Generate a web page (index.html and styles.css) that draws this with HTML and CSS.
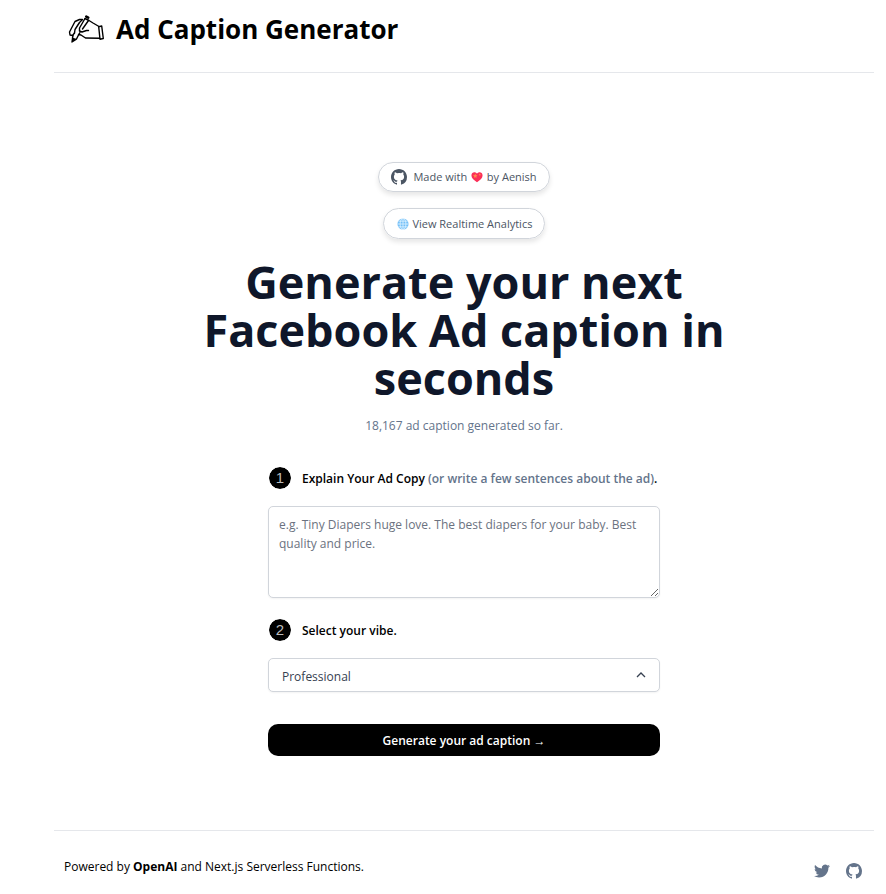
FILE: index.html
```html
<!DOCTYPE html>
<html lang="en">
<head>
<meta charset="utf-8">
<meta name="viewport" content="width=device-width, initial-scale=1">
<title>Ad Caption Generator</title>
<link rel="stylesheet" href="styles.css">
</head>
<body>
<svg class="sprite" aria-hidden="true">
  <symbol id="github" viewBox="2 2 20 20"><path fill="currentColor" d="M12 2C6.477 2 2 6.484 2 12.017c0 4.425 2.865 8.18 6.839 9.504.5.092.682-.217.682-.483 0-.237-.008-.868-.013-1.703-2.782.605-3.369-1.343-3.369-1.343-.454-1.158-1.11-1.466-1.11-1.466-.908-.62.069-.608.069-.608 1.003.07 1.531 1.032 1.531 1.032.892 1.53 2.341 1.088 2.91.832.092-.647.35-1.088.636-1.338-2.22-.253-4.555-1.113-4.555-4.951 0-1.093.39-1.988 1.029-2.688-.103-.253-.446-1.272.098-2.65 0 0 .84-.27 2.75 1.026A9.564 9.564 0 0 1 12 6.844c.85.004 1.705.115 2.504.337 1.909-1.296 2.747-1.027 2.747-1.027.546 1.379.202 2.398.1 2.651.64.7 1.028 1.595 1.028 2.688 0 3.848-2.339 4.695-4.566 4.943.359.309.678.92.678 1.855 0 1.338-.012 2.419-.012 2.747 0 .268.18.58.688.482A10.019 10.019 0 0 0 22 12.017C22 6.484 17.522 2 12 2z"/></symbol>
</svg>
<div class="page">
  <header class="header">
    <a class="brand" href="#">
      <svg class="brand-icon" viewBox="0 0 36 28" aria-hidden="true" fill="none" stroke="#000" stroke-width="1.400" stroke-linejoin="round" stroke-linecap="round">
        <path d="M14.500 4.500 11.500 4.500 7 6.500 1.500 17 2 20 4.500 20.500 6.500 18"/>
        <path d="M4.500 23 5 20.500M8.500 24 10.500 20 12 17.500"/>
        <path d="M6.500 18 7 14.500 11.500 7.500 14 5"/>
        <path d="M17 3.500 11.500 13 11.500 16 14 17 18.500 15.500 20.500 15.500M14.500 14 20.500 5.500"/>
        <path d="M17 3.500 21 5.500 25 8 31 11.500"/>
        <path d="M10.500 19.500 13 20 17.500 23 31.500 23.300"/>
        <path d="M30.700 11.700 33.700 11 35.300 23.500 32 24.200Z"/>
        <path d="M4.500 23.500 4 27 8 24.500Z" fill="#000"/>
        <path d="M18.300 1.600 20.200 2.600" stroke-width="2.600"/>
      </svg>
      <h1 class="brand-name">Ad Caption Generator</h1>
    </a>
  </header>
  <main class="main">
    <a class="pill" href="#">
      <svg class="pill-icon"><use href="#github"/></svg>
      <span class="pill-text">Made with
        <svg class="emoji" viewBox="0 0 14 14" role="img" aria-label="love"><path d="M7 13C3 10.500.5 8 .5 5.200.5 1 5.500.5 7 3.300 8.500.5 13.500 1 13.500 5.200 13.500 8 11 10.500 7 13Z" fill="#fb2f58"/><path d="m5 3 .8 1.700 1.800.3-1.300 1.200.3 1.800L5 7.200 3.400 8l.3-1.800L2.400 5l1.800-.3Z" fill="#ff8a4d"/><path d="m10.300 2.500.4 1 1 .3-.8.600.1 1-.8-.5-.8.500.2-1-.7-.600 1-.3Z" fill="#ff8a4c"/></svg>
        by Aenish</span>
    </a>
    <a class="pill" href="#">
      <span class="pill-text"><svg class="emoji" viewBox="0 0 14 14" aria-hidden="true"><circle cx="7" cy="7" r="6.500" fill="#74c0f8"/><g fill="none" stroke="#e4f5ff" stroke-width=".9"><ellipse cx="7" cy="7" rx="3.400" ry="6.500"/><path d="M7 .5v13M.5 7h13M1.500 3.700h11M1.500 10.300h11"/></g></svg>
        View Realtime Analytics</span>
    </a>
    <h2 class="headline">Generate your next Facebook Ad caption in seconds</h2>
    <p class="count">18,167 ad caption generated so far.</p>
    <form class="form">
      <div class="step">
        <span class="number">1</span>
        <label for="copy">Explain Your Ad Copy <span class="hint">(or write a few sentences about the ad)</span>.</label>
      </div>
      <textarea id="copy" rows="4" placeholder="e.g. Tiny Diapers huge love. The best diapers for your baby. Best quality and price."></textarea>
      <div class="step">
        <span class="number">2</span>
        <label for="vibe">Select your vibe.</label>
      </div>
      <div class="select-wrap">
        <select id="vibe"><option>Professional</option><option>Casual</option><option>Funny</option></select>
        <svg class="chevron" viewBox="0 0 16 16" aria-hidden="true"><path d="m4 10 4-4 4 4" fill="none" stroke="#374151" stroke-width="1.300"/></svg>
      </div>
      <button class="submit" type="button">Generate your ad caption →</button>
    </form>
  </main>
  <footer class="footer">
    <p class="powered">Powered by <a href="#">OpenAI</a> and Next.js Serverless Functions.</p>
    <nav class="social">
      <a href="#" aria-label="Twitter"><svg viewBox="0 0 24 24"><path fill="currentColor" d="M23.950 4.570a10 10 0 0 1-2.820.77 4.960 4.960 0 0 0 2.160-2.720c-.95.550-2 .95-3.130 1.180a4.920 4.920 0 0 0-8.380 4.480C7.690 8.090 4.070 6.130 1.640 3.160a4.820 4.820 0 0 0-.67 2.480c0 1.710.87 3.210 2.190 4.100a4.900 4.900 0 0 1-2.230-.62v.06a4.920 4.920 0 0 0 3.950 4.830 5 5 0 0 1-2.210.08 4.940 4.940 0 0 0 4.600 3.420A9.870 9.870 0 0 1 0 19.540a13.990 13.990 0 0 0 7.560 2.210c9.050 0 14-7.500 14-13.980 0-.21 0-.42-.02-.63a9.940 9.940 0 0 0 2.410-2.570z"/></svg></a>
      <a href="#" aria-label="GitHub"><svg><use href="#github"/></svg></a>
    </nav>
  </footer>
</div>
</body>
</html>
```
FILE: styles.css
```css
* { box-sizing: border-box; }
body, h1, h2, p { margin: 0; }
body {
  background: #fff;
  color: #000;
  font-family: "Segoe UI", "Open Sans", "Noto Sans", sans-serif;
  font-size: 12px;
  line-height: 20px;
}
a { color: inherit; text-decoration: none; }
.sprite { display: none; }
.page { margin: 0 12px 0 54px; }
.header {
  display: flex;
  height: 73px;
  padding: 10px 14px 0;
  border-bottom: 1px solid #e5e7eb;
}
.brand { display: flex; align-items: center; gap: 12px; height: 38px; }
.brand-icon { width: 36px; height: 28px; }
.brand-name { font-size: 26px; font-weight: 700; line-height: 38px; }
.main {
  display: flex;
  flex-direction: column;
  align-items: center;
  padding: 89px 0 74px;
}
.pill {
  display: flex;
  align-items: center;
  gap: 6px;
  height: 31px;
  margin-bottom: 16px;
  padding: 0 12px;
  border: 1px solid #d1d5db;
  border-radius: 16px;
  color: #4b5563;
  font-size: 11px;
  box-shadow: 0 3px 5px rgb(0 0 0 / 10%);
}
.pill + .pill { margin-bottom: 19px; }
.pill:first-child { height: 30px; }
.pill-icon { width: 16px; height: 16px; }
.emoji { width: 12px; height: 12px; margin: 0 1px; vertical-align: -2px; }
.headline {
  max-width: 568px;
  color: #0f172a;
  font-size: 45px;
  font-weight: 700;
  line-height: 48px;
  text-align: center;
}
.count { margin: 14px 0 30px; color: #64748b; }
.form { width: 100%; max-width: 392px; }
.step {
  display: flex;
  align-items: center;
  gap: 10px;
  height: 24px;
  font-weight: 600;
}
.step label { padding-top: 2px; }
.step .hint { color: #64748b; }
.number {
  width: 24px;
  height: 24px;
  border: 1px solid #fff;
  border-radius: 50%;
  background: #000;
  background-clip: padding-box;
  color: #bbb;
  font: 15px/22px "Liberation Sans", Arial, sans-serif;
  text-align: center;
}
textarea, select {
  display: block;
  width: 100%;
  border: 1px solid #d1d5db;
  border-radius: 5px;
  background: #fff;
  font-family: inherit;
  font-size: 12px;
  box-shadow: 0 1px 2px rgb(0 0 0 / 5%);
}
textarea {
  height: 92px;
  margin: 16px 0 20px;
  padding: 8px 10px;
  line-height: 19px;
}
textarea::placeholder { color: #6b7280; }
.select-wrap { position: relative; margin: 16px 0 32px; }
select {
  height: 34px;
  padding: 2px 32px 0 13px;
  color: #374151;
  appearance: none;
}
.chevron {
  position: absolute;
  top: 9px;
  right: 11px;
  width: 16px;
  height: 16px;
  pointer-events: none;
}
.submit {
  width: 100%;
  height: 32px;
  padding: 2px 0 0;
  border: 0;
  border-radius: 10px;
  background: #000;
  color: #fff;
  font: 600 12px/20px "Segoe UI", "Open Sans", "Noto Sans", sans-serif;
}
.footer {
  display: flex;
  justify-content: space-between;
  align-items: flex-start;
  padding: 26px 12px 12px 10px;
  border-top: 1px solid #e5e7eb;
}
.powered a { font-weight: 700; }
.social { display: flex; gap: 16px; padding-top: 6px; color: #64748b; }
.social svg { display: block; width: 16px; height: 16px; }
```
